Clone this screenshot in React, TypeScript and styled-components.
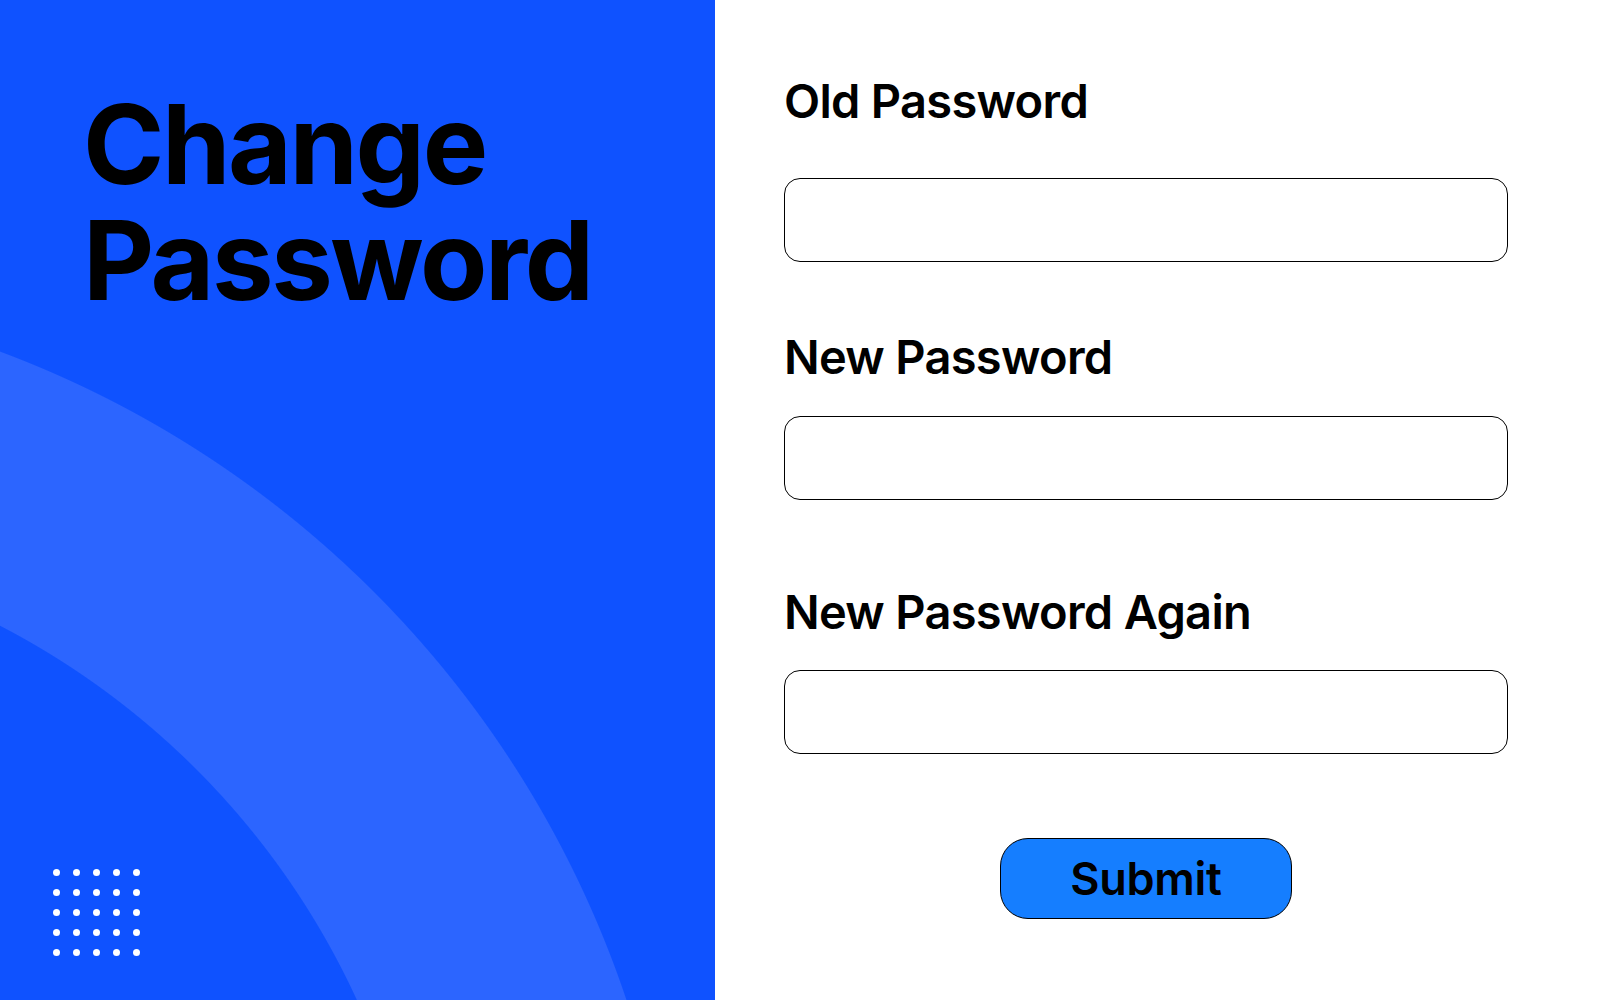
import React from "react";
import styled, { createGlobalStyle } from "styled-components";

const GlobalStyle = createGlobalStyle`
  html, body {
    margin: 0;
    padding: 0;
  }
  body {
    font-family: "Inter", "Noto Sans", sans-serif;
    color: #000;
    background: #fff;
  }
  * { box-sizing: border-box; }
`;

const Page = styled.div`
  display: grid;
  grid-template-columns: 715px 1fr;
  width: 1600px;
  height: 1000px;
  overflow: hidden;
`;

const LeftPanel = styled.section`
  display: flex;
  flex-direction: column;
  justify-content: space-between;
  padding: 86px 0 44px 53px;
  background: radial-gradient(
    circle at -366px 1332px,
    #0f52ff 0 795px,
    #2c65ff 796px 1046px,
    #0f52ff 1047px
  );
`;

const Title = styled.h1`
  margin: 0 0 0 30px;
  font-family: "Inter", "Noto Sans", sans-serif;
  font-weight: 700;
  font-size: 110px;
  line-height: 116px;
  letter-spacing: -2.4px;
  color: #000;
`;

const TitleLine = styled.span`
  display: block;
`;

const DotGrid = styled.div`
  display: grid;
  grid-template-columns: repeat(5, 7px);
  grid-auto-rows: 7px;
  gap: 13px;
`;

const Dot = styled.span`
  width: 7px;
  height: 7px;
  border-radius: 50%;
  background: #fff;
`;

const RightPanel = styled.section`
  padding: 77px 0 0 69px;
  background: #fff;
`;

const Form = styled.form`
  display: flex;
  flex-direction: column;
  width: 724px;
`;

const Label = styled.label<{ $gap: number }>`
  display: block;
  margin-top: ${(p) => p.$gap}px;
  font-family: "Inter", "Noto Sans", sans-serif;
  font-weight: 600;
  font-size: 47px;
  line-height: 48px;
  letter-spacing: -0.7px;
  color: #000;
`;

const Input = styled.input<{ $gap: number }>`
  display: block;
  width: 100%;
  height: 84px;
  margin-top: ${(p) => p.$gap}px;
  padding: 0 20px;
  border: 1px solid #000;
  border-radius: 16px;
  background: #fff;
  font-family: "Inter", sans-serif;
  font-size: 28px;
  outline: none;
`;

const SubmitButton = styled.button`
  align-self: center;
  width: 292px;
  height: 81px;
  margin-top: 84px;
  border: 1px solid #000;
  border-radius: 28px;
  background: #157eff;
  color: #000;
  font-family: "Inter", "Noto Sans", sans-serif;
  font-weight: 600;
  font-size: 45px;
  letter-spacing: -0.3px;
  cursor: pointer;
`;

const fields = [
  { id: "old", label: "Old Password", labelGap: 0, inputGap: 53 },
  { id: "new", label: "New Password", labelGap: 71, inputGap: 35 },
  { id: "again", label: "New Password Again", labelGap: 88, inputGap: 34 },
];

export default function App() {
  return (
    <>
      <GlobalStyle />
      <Page>
        <LeftPanel>
          <Title>
            <TitleLine>Change</TitleLine>
            <TitleLine>Password</TitleLine>
          </Title>
          <DotGrid>
            {Array.from({ length: 25 }).map((_, i) => (
              <Dot key={i} />
            ))}
          </DotGrid>
        </LeftPanel>
        <RightPanel>
          <Form onSubmit={(e) => e.preventDefault()}>
            {fields.map((f) => (
              <React.Fragment key={f.id}>
                <Label htmlFor={f.id} $gap={f.labelGap}>
                  {f.label}
                </Label>
                <Input id={f.id} type="password" $gap={f.inputGap} />
              </React.Fragment>
            ))}
            <SubmitButton type="submit">Submit</SubmitButton>
          </Form>
        </RightPanel>
      </Page>
    </>
  );
}
